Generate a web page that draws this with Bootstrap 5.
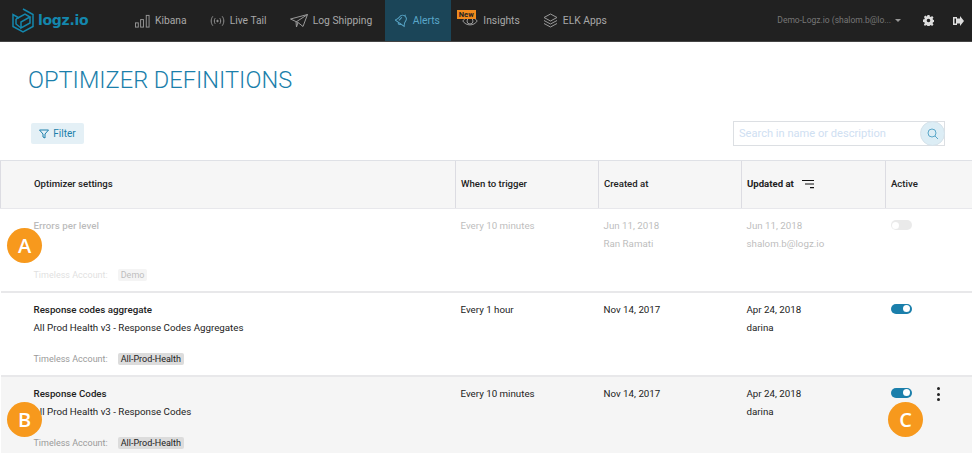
<!DOCTYPE html>
<html lang="en">

<head>
    <meta charset="UTF-8">
    <title>Optimizer definitions</title>
    <link href="https://cdn.jsdelivr.net/npm/bootstrap@5.3.0/dist/css/bootstrap.min.css" rel="stylesheet">
    <style>
        body {
            font-family: Roboto, "Liberation Sans", sans-serif;
            font-size: 9.75px;
            color: #222;
            background: #fff;
            height: 453px;
            overflow: hidden;
            position: relative;
        }

        .topbar {
            height: 42px;
            background: #212121;
            border-bottom: 1px solid #444;
            padding: 0;
            flex-wrap: nowrap;
        }

        .logo-box {
            width: 123.5px;
            padding-left: 12px;
            gap: 4px;
        }

        .logo-word {
            font-family: "DejaVu Sans", sans-serif;
            font-weight: 700;
            font-size: 14px;
            color: #1487ad;
            letter-spacing: -0.3px;
        }

        .top-link {
            height: 41px;
            padding: 0 11.5px;
            gap: 5px;
            color: #a8a8a8;
            font-size: 10.3px;
            text-decoration: none;
            position: relative;
            white-space: nowrap;
        }

        .top-link.on {
            background: #1b4558;
            color: #5aa7c9;
            margin-left: 1px;
            padding: 0 11px 0 10px;
        }

        .new-tag {
            position: absolute;
            left: 6px;
            top: 10px;
            background: #f08a1d;
            color: #222;
            font-size: 7.5px;
            font-weight: 700;
            line-height: 9px;
            padding: 0 2px;
        }

        .user-menu {
            color: #777;
            font-size: 8.5px;
            white-space: nowrap;
        }

        .caret-down {
            width: 0;
            height: 0;
            margin-left: 4px;
            border-left: 3px solid transparent;
            border-right: 3px solid transparent;
            border-top: 3px solid #999;
        }

        .gear-ico {
            margin-left: 22px;
        }

        .exit-ico {
            margin-left: 19px;
            margin-right: 8px;
        }

        .page-title {
            font-size: 23.6px;
            font-weight: 300;
            color: #1b7fab;
            margin: 0;
            padding: 24px 0 0 28px;
            line-height: 28px;
            height: 73px;
        }

        .tools-bar {
            height: 37px;
            padding: 0 27px 0 31px;
        }

        .filter-btn {
            background: #e4f0f6;
            color: #1b7fab;
            font-size: 10px;
            border: 0;
            border-radius: 2px;
            height: 21px;
            width: 53px;
            padding: 0;
            gap: 4px;
        }

        .search-box {
            width: 212px;
            height: 25px;
        }

        .search-box input {
            width: 100%;
            height: 25px;
            border: 1px solid #dcdfe3;
            font-size: 11.1px;
            padding: 0 5px;
            outline: 0;
            font-family: inherit;
        }

        .search-box input::placeholder {
            color: #cfe0f2;
        }

        .search-btn {
            position: absolute;
            right: 0;
            top: 0;
            width: 25px;
            height: 25px;
            border-radius: 50%;
            background: #dcedf5;
            border: 1px solid #d5e2ea;
        }

        .opt-table {
            table-layout: fixed;
            width: 972px;
            margin: 8px 0 0;
            border-collapse: collapse;
            font-size: 9.75px;
        }

        .opt-table th {
            height: 48px;
            background: #f6f6f6;
            font-size: 9.6px;
            font-weight: 500;
            padding: 0 5px;
            vertical-align: middle;
            border-top: 1px solid #dfe1e6;
            border-bottom: 1px solid #e8e8ec;
            border-left: 1px solid #dcdce2;
            color: #222;
        }

        .opt-table th:first-child {
            padding-left: 33px;
        }

        .opt-table td {
            height: 84px;
            padding: 8px 5px 0;
            vertical-align: top;
            line-height: 18px;
            border-bottom: 2px solid #e8e8ea;
            background: transparent;
            color: #222;
        }

        .opt-table td:first-child {
            padding-left: 33px;
        }

        .opt-table tr.faded td {
            height: 83px;
        }

        .opt-table tr.faded td>* {
            opacity: .3;
        }

        .opt-table tr.hovered td {
            background: #f5f5f5;
        }

        .rule-name {
            font-weight: 500;
        }

        .rule-desc {
            height: 31px;
        }

        .acct-line {
            font-size: 9px;
        }

        .acct-label {
            color: #9a9a9a;
            margin-right: 10px;
        }

        .acct-tag {
            background: #dcdcdc;
            border-radius: 2px;
            padding: 1px 3px;
        }

        .tog {
            display: block;
            width: 21px;
            height: 10px;
            border-radius: 5px;
            background: #1b7fab;
            position: relative;
            margin-top: 3px;
        }

        .tog::after {
            content: "";
            position: absolute;
            right: 1.5px;
            top: 1.5px;
            width: 7px;
            height: 7px;
            border-radius: 50%;
            background: #fff;
        }

        .tog.off {
            background: #bbb;
        }

        .tog.off::after {
            right: auto;
            left: 1.5px;
        }

        .dots-menu {
            position: absolute;
            left: 937px;
            top: 387px;
            width: 3px;
            height: 14px;
            display: flex;
            flex-direction: column;
            justify-content: space-between;
        }

        .dots-menu i {
            display: block;
            width: 3px;
            height: 3px;
            border-radius: 50%;
            background: #222;
        }

        .callout {
            position: absolute;
            width: 35px;
            height: 35px;
            border-radius: 50%;
            background: #f7991d;
            color: #fff;
            font-family: "Open Sans", sans-serif;
            font-weight: 600;
            font-size: 20px;
            line-height: 35px;
            text-align: center;
        }

        .call-a { left: 7px; top: 228px; }
        .call-b { left: 7px; top: 402px; }
        .call-c { left: 888px; top: 402px; }
    </style>
</head>

<body>
    <nav class="navbar topbar d-flex align-items-center">
        <div class="logo-box d-flex align-items-center">
            <svg width="22" height="25" viewBox="0 0 22 25" fill="none" stroke="#1487ad" stroke-width="1.5">
                <path d="M11 1 21 6.500v12L11 24 1 18.500v-12l6 3.500" />
                <path d="M4 11l9-5 5 3-9 5v6l9-5v-6" />
                <path d="M4 11v5l5 4" />
            </svg>
            <span class="logo-word">logz.io</span>
        </div>
        <a class="top-link d-flex align-items-center" href="#">
            <svg width="15" height="14" viewBox="0 0 16 14" fill="none" stroke="#999" stroke-width="1">
                <rect x=".5" y="9" width="3" height="4.500" />
                <rect x="6" y="5.500" width="3" height="8" />
                <rect x="12" y="1" width="3" height="12.500" />
            </svg>Kibana</a>
        <a class="top-link d-flex align-items-center" href="#">
            <svg width="15" height="12" viewBox="0 0 16 12" fill="none" stroke="#999" stroke-width="1">
                <path d="M3 1C.7 4 .7 8 3 11M5.500 3C4.300 5 4.300 7 5.500 9M13 1c2.300 3 2.300 7 0 10M10.500 3c1.200 2 1.200 4 0 6" />
                <circle cx="8" cy="6" r=".8" fill="#999" />
            </svg>Live Tail</a>
        <a class="top-link d-flex align-items-center" href="#">
            <svg width="18" height="14" viewBox="0 0 18 14" fill="none" stroke="#999" stroke-width="1">
                <path d="M.5 5 17.500.5 13 12.500 8 8.500zM17.500.5 6 8l.5 5L8 8.500" />
            </svg>Log Shipping</a>
        <a class="top-link on d-flex align-items-center" href="#">
            <svg width="13" height="15" viewBox="0 0 14 16" fill="none" stroke="#5aa7c9" stroke-width="1">
                <g transform="rotate(35 7 8)">
                    <path d="M7 2C4.500 2 3 4 3 6.500c0 3-1.500 4-2 5h12c-.5-1-2-2-2-5C11 4 9.500 2 7 2z" />
                    <path d="M7 2V.5M5.500 11.500c0 2 3 2 3 0M5.500 5C5 6 5 8 4.500 9.500" />
                </g>
            </svg>Alerts</a>
        <a class="top-link d-flex align-items-center" href="#">
            <span class="new-tag">New</span>
            <svg width="16" height="12" viewBox="0 0 16 12" fill="none" stroke="#999" stroke-width="1">
                <path d="M.8 6C4 .8 12 .8 15.200 6 12 11.200 4 11.200 .8 6z" />
                <circle cx="8" cy="6" r="3" />
            </svg>Insights</a>
        <a class="top-link d-flex align-items-center" href="#">
            <svg width="15" height="15" viewBox="0 0 15 15" fill="none" stroke="#999" stroke-width="1">
                <path d="M7.500 1 14 4.500 7.500 8 1 4.500zM1 7.500 7.500 11 14 7.500M1 10.500 7.500 14 14 10.500" />
            </svg>ELK Apps</a>
        <div class="ms-auto d-flex align-items-center">
            <span class="user-menu">Demo-Logz.io (shalom.b@lo...</span>
            <span class="caret-down"></span>
            <svg class="gear-ico" width="11" height="11" viewBox="0 0 11 11" fill="#ddd">
                <path d="M4.500 0h2l.3 1.500 1 .4 1.300-.9 1.400 1.400-.9 1.300.4 1 1.500.3v2l-1.500.3-.4 1 .9 1.300-1.400 1.400-1.300-.9-1 .4-.3 1.500h-2l-.3-1.500-1-.4-1.300.9L.9 9.600l.9-1.300-.4-1L0 7V4.500l1.400-.3.4-1-.9-1.300L2.300 .5l1.300 .9 .6-.3zM5.500 3.700a1.800 1.800 0 1 0 0 3.600 1.800 1.800 0 0 0 0-3.600z" fill-rule="evenodd" />
            </svg>
            <svg class="exit-ico" width="11" height="10" viewBox="0 0 11 10" fill="#ddd">
                <path d="M0 1h4v1.500H1.500v5H4V9H0zM5 2.500 7 2.500 7 0 11 5 7 10 7 7.500 3 7.500 3 2.500z" />
            </svg>
        </div>
    </nav>

    <h1 class="page-title">OPTIMIZER DEFINITIONS</h1>

    <div class="tools-bar d-flex align-items-center justify-content-between">
        <button class="filter-btn btn d-flex align-items-center justify-content-center" type="button">
            <svg width="10" height="10" viewBox="0 0 10 10" fill="none" stroke="#1b7fab" stroke-width="1">
                <path d="M.5 1h9L6 5v4L4 8V5z" />
            </svg>Filter</button>
        <div class="search-box position-relative">
            <input type="text" placeholder="Search in name or description">
            <span class="search-btn d-flex align-items-center justify-content-center">
                <svg width="12" height="12" viewBox="0 0 12 12" fill="none" stroke="#5aa7c9" stroke-width="1">
                    <circle cx="5" cy="5" r="4" />
                    <path d="M8 8l3 3" />
                </svg>
            </span>
        </div>
    </div>

    <table class="opt-table">
        <colgroup>
            <col style="width:455px">
            <col style="width:143px">
            <col style="width:143px">
            <col style="width:144px">
            <col style="width:87px">
        </colgroup>
        <thead>
            <tr>
                <th>Optimizer settings</th>
                <th>When to trigger</th>
                <th>Created at</th>
                <th>
                    <span class="d-flex align-items-center gap-2"><b>Updated at</b>
                        <svg width="12" height="10" viewBox="0 0 12 10" fill="#111">
                            <path d="M0 1h12v1.100H0zM3 4.500h9v1.100H3zM8 8h4v1.300H8z" />
                        </svg>
                    </span>
                </th>
                <th>Active</th>
            </tr>
        </thead>
        <tbody>
            <tr class="faded">
                <td>
                    <div class="rule-name">Errors per level</div>
                    <div class="rule-desc"></div>
                    <div class="acct-line"><span class="acct-label">Timeless Account:</span><span class="acct-tag">Demo</span></div>
                </td>
                <td>
                    <div>Every 10 minutes</div>
                </td>
                <td>
                    <div>Jun 11, 2018</div>
                    <div>Ran Ramati</div>
                </td>
                <td>
                    <div>Jun 11, 2018</div>
                    <div>shalom.b@logz.io</div>
                </td>
                <td><span class="tog off"></span></td>
            </tr>
            <tr>
                <td>
                    <div class="rule-name">Response codes aggregate</div>
                    <div class="rule-desc">All Prod Health v3 - Response Codes Aggregates</div>
                    <div class="acct-line"><span class="acct-label">Timeless Account:</span><span class="acct-tag">All-Prod-Health</span></div>
                </td>
                <td>Every 1 hour</td>
                <td>Nov 14, 2017</td>
                <td>
                    <div>Apr 24, 2018</div>
                    <div>darina</div>
                </td>
                <td><span class="tog"></span></td>
            </tr>
            <tr class="hovered">
                <td>
                    <div class="rule-name">Response Codes</div>
                    <div class="rule-desc">All Prod Health v3 - Response Codes</div>
                    <div class="acct-line"><span class="acct-label">Timeless Account:</span><span class="acct-tag">All-Prod-Health</span></div>
                </td>
                <td>Every 10 minutes</td>
                <td>Nov 14, 2017</td>
                <td>
                    <div>Apr 24, 2018</div>
                    <div>darina</div>
                </td>
                <td><span class="tog"></span></td>
            </tr>
        </tbody>
    </table>

    <span class="dots-menu"><i></i><i></i><i></i></span>
    <span class="callout call-a">A</span>
    <span class="callout call-b">B</span>
    <span class="callout call-c">C</span>

    <script src="https://cdn.jsdelivr.net/npm/bootstrap@5.3.0/dist/js/bootstrap.bundle.min.js"></script>
</body>

</html>
